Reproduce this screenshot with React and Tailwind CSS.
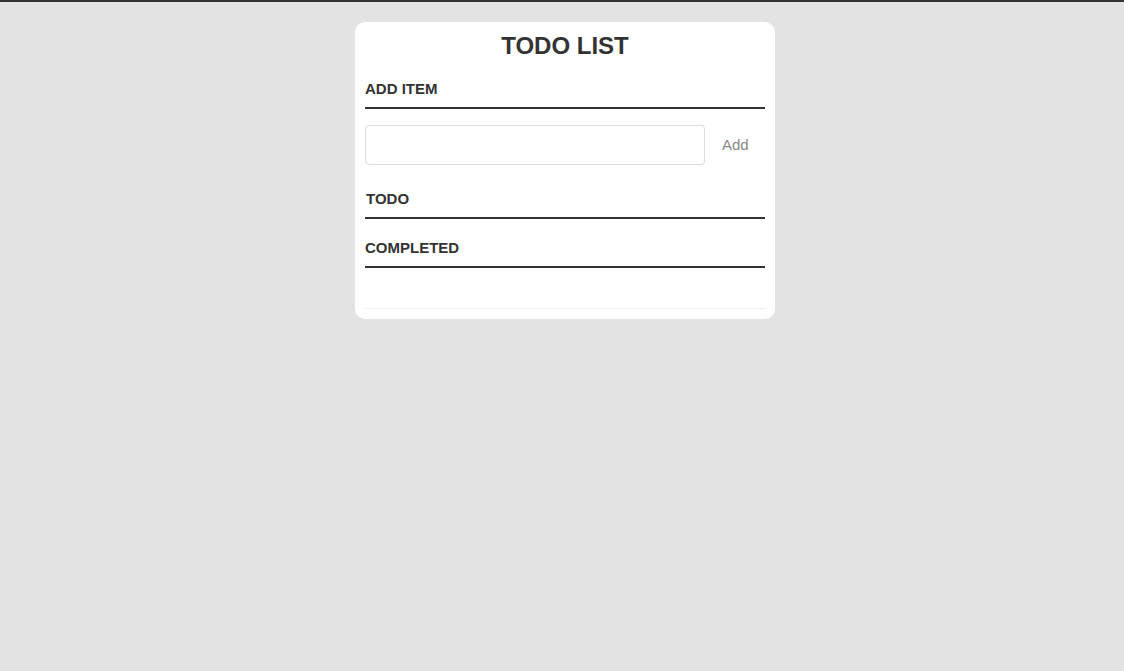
import React, { useState } from 'react';

const SectionTitle = ({ children, className = '' }) => (
  <h3 className={`text-[15px] leading-[18px] font-bold text-[#333] uppercase border-b-2 border-[#333] pb-[9px] ${className}`}>
    {children}
  </h3>
);

const App = () => {
  const [text, setText] = useState('');

  return (
    <div className="min-h-[671px] bg-[#e3e3e3] border-t-2 border-[#333] pl-[6px] font-['Liberation_Sans',Arial,sans-serif]">
      <div className="w-[420px] mx-auto mt-5 bg-white rounded-[10px] px-[10px] pt-[10px] pb-[10px]">
        <h1 className="text-[24px] leading-[28px] font-bold text-center text-[#333]">TODO LIST</h1>

        <SectionTitle className="mt-5">Add item</SectionTitle>
        <div className="flex items-center mt-4">
          <input
            type="text"
            value={text}
            onChange={(e) => setText(e.target.value)}
            className="w-[340px] h-10 border border-[#ddd] rounded-[4px] px-2 text-[15px] outline-none"
          />
          <button className="ml-[17px] text-[15px] text-[#888]">Add</button>
        </div>

        <SectionTitle className="mt-[25px] pl-px">Todo</SectionTitle>
        <ul></ul>

        <SectionTitle className="mt-5">Completed</SectionTitle>
        <ul className="h-[41px] border-b border-[#eee]"></ul>
      </div>
    </div>
  );
};

export default App;
